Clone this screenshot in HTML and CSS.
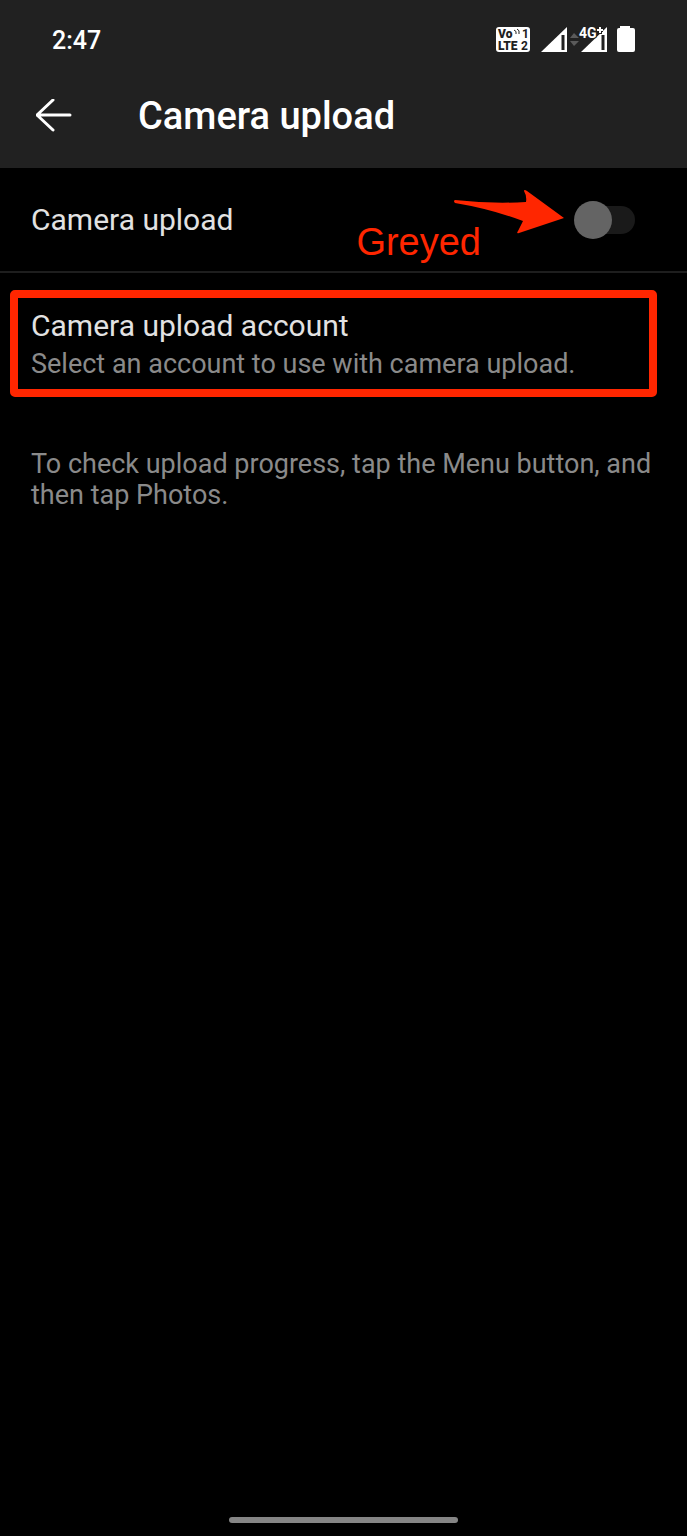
FILE: index.html
```html
<!DOCTYPE html>
<html lang="en">
<head>
    <meta charset="UTF-8">
    <meta name="viewport" content="width=device-width, initial-scale=1.0">
    <title>Camera upload</title>
    <link rel="stylesheet" href="styles.css">
</head>
<body>
    <header class="header">
        <div class="status-bar">
            <time class="clock">2:47</time>
            <svg class="status-icons" width="142" height="30" viewBox="0 0 142 30" aria-hidden="true">
                <!-- VoLTE badge -->
                <rect x="1" y="2" width="34" height="25" rx="3" fill="#fff"/>
                <g class="volte">
                    <text x="3" y="13">Vo</text>
                    <text class="sim" x="27" y="13">1</text>
                    <text x="3" y="25">LTE</text>
                    <text class="sim" x="26" y="25">2</text>
                </g>
                <path d="M19 5q3 1 2 4M22 4q3 1 2 5" fill="none" stroke="#212121" stroke-width="1"/>
                <!-- first SIM -->
                <path d="M46 27L72 2V27Z" fill="#fff"/>
                <path d="M68 10V25" stroke="#212121" stroke-width="3"/>
                <path d="M75 13L79 8L84 13ZM75 16H84L79 21Z" fill="#5a5a5a"/>
                <!-- second SIM -->
                <path d="M86 27L112 2V27Z" fill="#fff"/>
                <path d="M108 10V25" stroke="#212121" stroke-width="3"/>
                <text class="network" x="84" y="13">4G</text>
                <path d="M105 2V9M102 5H108" stroke="#212121" stroke-width="4"/>
                <path d="M105 2V8M102 5H108" stroke="#fff" stroke-width="2"/>
                <!-- battery -->
                <path d="M125 3V1H135V3H138Q140 3 140 5V25Q140 27 138 27H124Q122 27 122 25V5Q122 3 124 3Z" fill="#fff"/>
            </svg>
        </div>
        <div class="app-bar">
            <button class="back-btn" type="button" aria-label="Back">
                <svg width="36" height="34" viewBox="0 0 36 34">
                    <path d="M17 1L1 16L17 31M1 16H34" fill="none" stroke="#fff" stroke-width="3" stroke-linecap="round" stroke-linejoin="round"/>
                </svg>
            </button>
            <h1>Camera upload</h1>
        </div>
    </header>

    <main class="settings">
        <div class="row">
            <label for="camera-upload">Camera upload</label>
            <input class="switch" type="checkbox" role="switch" id="camera-upload" disabled>
            <div class="note">
                <span class="note-text">Greyed</span>
                <svg class="note-arrow" width="112" height="46" viewBox="0 0 112 46" aria-hidden="true">
                    <path d="M2 11Q38 15 73 13Q74 7 71 2Q71 0 74 2L111 29L66 44Q63 45 65 42L70 32Q38 20 2 14Q0 12 2 11Z" fill="#ff2600"/>
                </svg>
            </div>
        </div>

        <button class="account" type="button">
            <span class="account-title">Camera upload account</span>
            <span class="account-text">Select an account to use with camera upload.</span>
        </button>

        <p class="hint">To check upload progress, tap the Menu button, and then tap Photos.</p>
    </main>

    <div class="nav-handle"></div>
</body>
</html>
```

FILE: styles.css
```css
:root {
    --bar: #212121;
    --text: #e2e2e2;
    --muted: #8a8a8a;
    --red: #ff2600;
}

* {
    box-sizing: border-box;
}

body {
    display: flex;
    flex-direction: column;
    min-height: 100vh;
    margin: 0;
    background: #000;
    color: var(--text);
    font-family: Roboto, "Liberation Sans", sans-serif;
}

button {
    border: none;
    background: none;
    color: inherit;
    font-family: inherit;
    text-align: left;
}

.header {
    background: var(--bar);
    color: #fff;
}

.status-bar {
    display: flex;
    align-items: center;
    justify-content: space-between;
    height: 80px;
    padding: 0 50px 0 52px;
}

.clock {
    font-size: 25px;
    font-weight: 500;
}

.volte {
    fill: var(--bar);
    font-size: 12px;
    font-weight: 900;
}

.sim {
    font-weight: 700;
}

.network {
    fill: #fff;
    stroke: var(--bar);
    stroke-width: 2px;
    paint-order: stroke;
    font-size: 14px;
    font-weight: 700;
}

.app-bar {
    display: flex;
    align-items: center;
    gap: 66px;
    height: 88px;
    padding: 0 36px 16px;
}

.back-btn {
    display: flex;
    padding: 0;
}

h1 {
    margin: 0;
    font-size: 38px;
    font-weight: 500;
}

.settings {
    flex: 1;
}

.row {
    position: relative;
    display: flex;
    align-items: center;
    justify-content: space-between;
    height: 105px;
    padding: 0 52px 0 31px;
    border-bottom: 2px solid #1e1e1e;
    font-size: 30px;
}

.switch {
    appearance: none;
    display: flex;
    align-items: center;
    width: 56px;
    height: 28px;
    margin: 0;
    border-radius: 14px;
    background: #1a1a1a;
}

.switch::before {
    content: "";
    flex: none;
    width: 38px;
    height: 38px;
    margin-left: -5px;
    border-radius: 50%;
    background: #646464;
}

/* red callout over the row */
.note {
    position: absolute;
    top: 21px;
    right: 122px;
    display: flex;
    align-items: flex-start;
    color: var(--red);
}

.note-text {
    margin: 31px -28px 0 0;
    font-family: "Liberation Sans", Arial, sans-serif;
    font-size: 38px;
    line-height: 44px;
}

.account {
    display: flex;
    flex-direction: column;
    width: calc(100% - 40px);
    margin: 17px 30px 0 10px;
    padding: 8px 13px 7px;
    border: 8px solid var(--red);
    border-radius: 5px;
}

.account-title {
    font-size: 30px;
    line-height: 40px;
}

.account-text,
.hint {
    color: var(--muted);
    font-size: 27px;
}

.account-text {
    line-height: 36px;
}

.hint {
    margin: 52px 31px 0;
    line-height: 31px;
}

.nav-handle {
    width: 33.4%;
    height: 6px;
    margin: 0 auto 13px;
    border-radius: 3px;
    background: #858585;
}
```
